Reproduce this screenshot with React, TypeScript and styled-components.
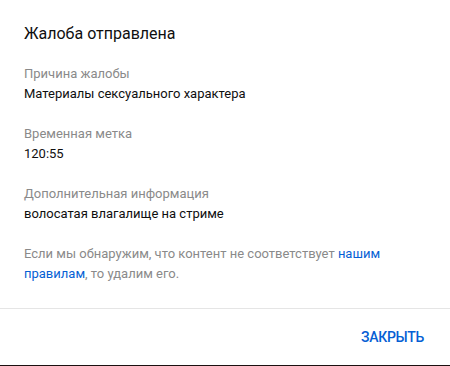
import React from "react";
import styled, { createGlobalStyle } from "styled-components";

const Global = createGlobalStyle`
  html, body { margin: 0; padding: 0; background: #ffffff; }
  body { font-family: Roboto, "Noto Sans", Arial, sans-serif; }
  * { box-sizing: border-box; }
`;

const Dialog = styled.div`
  width: 450px;
  height: 366px;
  display: flex;
  flex-direction: column;
  background: #ffffff;
  border-bottom: 1px solid #1c1010;
`;

const Body = styled.div`
  flex: 1;
  padding: 22px 24px 0 24px;
  display: flex;
  flex-direction: column;
`;

const Title = styled.h2`
  margin: 0 0 18px 0;
  font-size: 16px;
  line-height: 24px;
  font-weight: 400;
  color: #0f0f0f;
`;

const Field = styled.div`
  display: flex;
  flex-direction: column;
  margin-bottom: 20px;
`;

const Label = styled.div`
  font-size: 13px;
  line-height: 20px;
  color: #8a8a8a;
`;

const Value = styled.div`
  font-size: 13px;
  line-height: 20px;
  color: #0f0f0f;
`;

const Note = styled.p`
  margin: 0;
  font-size: 13px;
  line-height: 20px;
  color: #8a8a8a;
`;

const Link = styled.a`
  color: #065fd4;
  text-decoration: none;
`;

const Footer = styled.div`
  height: 57px;
  border-top: 1px solid #e5e5e5;
  display: flex;
  justify-content: flex-end;
  align-items: center;
  padding: 0 16px 0 0;
`;

const Button = styled.button`
  background: none;
  border: none;
  padding: 8px 10px;
  font-family: Roboto, "Noto Sans", Arial, sans-serif;
  font-size: 14px;
  font-weight: 500;
  line-height: 20px;
  letter-spacing: -0.3px;
  color: #065fd4;
  text-transform: uppercase;
  cursor: pointer;
`;

export default function App() {
  return (
    <>
      <Global />
      <Dialog>
        <Body>
          <Title>Жалоба отправлена</Title>
          <Field>
            <Label>Причина жалобы</Label>
            <Value>Материалы сексуального характера</Value>
          </Field>
          <Field>
            <Label>Временная метка</Label>
            <Value>120:55</Value>
          </Field>
          <Field>
            <Label>Дополнительная информация</Label>
            <Value>волосатая влагалище на стриме</Value>
          </Field>
          <Note>
            Если мы обнаружим, что контент не соответствует <Link href="#">нашим правилам</Link>, то удалим его.
          </Note>
        </Body>
        <Footer>
          <Button>Закрыть</Button>
        </Footer>
      </Dialog>
    </>
  );
}
